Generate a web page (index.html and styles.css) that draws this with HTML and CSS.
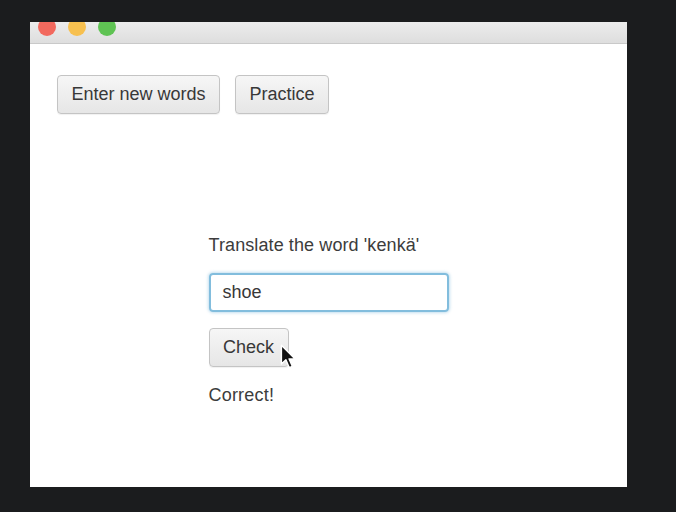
FILE: index.html
```html
<!DOCTYPE html>
<html>
<head>
<meta charset="utf-8">
<link rel="stylesheet" href="styles.css">
</head>
<body>
<div class="window">
  <div class="titlebar">
    <span class="light red"></span>
    <span class="light yellow"></span>
    <span class="light green"></span>
  </div>
  <div class="content">
    <div class="toolbar">
      <button class="btn btn-lg">Enter new words</button>
      <button class="btn btn-lg">Practice</button>
    </div>
    <div class="practice">
      <div class="label">Translate the word 'kenkä'</div>
      <div class="field">shoe</div>
      <div class="check-row">
        <button class="btn btn-check">Check</button>
        <svg class="cursor" width="17" height="26" viewBox="0 0 14 22">
          <path d="M1 1 L1 17 L4.8 13.4 L7.6 20 L10.2 18.9 L7.5 12.6 L12.6 12.6 Z" fill="#111" stroke="#fff" stroke-width="1.2" stroke-linejoin="round"/>
        </svg>
      </div>
      <div class="result">Correct!</div>
    </div>
  </div>
</div>
</body>
</html>
```

FILE: styles.css
```css
html, body {
  margin: 0;
  padding: 0;
}
body {
  background: #1b1c1e;
  width: 676px;
  height: 512px;
  padding: 22px 0 0 30px;
  box-sizing: border-box;
  font-family: "Liberation Sans", Arial, sans-serif;
  overflow: hidden;
}
.window {
  width: 597px;
  height: 465px;
  background: #ffffff;
  display: flex;
  flex-direction: column;
  overflow: hidden;
}
.titlebar {
  height: 21px;
  flex: none;
  background: linear-gradient(#ececec, #dedede);
  border-bottom: 1px solid #c9c9c9;
  display: flex;
  align-items: flex-start;
  gap: 12px;
  padding-left: 8px;
  overflow: hidden;
}
.light {
  width: 18px;
  height: 18px;
  border-radius: 50%;
  margin-top: -4px;
  flex: none;
}
.red { background: #f2695e; }
.yellow { background: #f7c04f; }
.green { background: #5fc353; }
.content {
  flex: 1;
  display: flex;
  flex-direction: column;
}
.toolbar {
  display: flex;
  gap: 15px;
  padding: 31px 0 0 27px;
}
.btn {
  font-family: "Liberation Sans", Arial, sans-serif;
  font-size: 18px;
  color: #383838;
  background: linear-gradient(#f6f6f6, #e6e6e6);
  border: 1px solid #c4c4c4;
  border-radius: 4px;
  box-shadow: 0 1px 1px rgba(0,0,0,0.06);
  padding: 0;
  height: 39px;
  box-sizing: border-box;
}
.btn-lg:first-child { width: 163px; }
.btn-lg:last-child { width: 94px; }
.practice {
  display: flex;
  flex-direction: column;
  align-items: flex-start;
  width: 240px;
  margin: 120px auto 0;
}
.label {
  font-size: 18px;
  line-height: 22px;
  color: #3c3c3c;
  letter-spacing: 0.1px;
}
.field {
  margin-top: 17px;
  width: 240px;
  height: 39px;
  box-sizing: border-box;
  border: 2px solid #82bddd;
  border-radius: 4px;
  box-shadow: 0 0 3px 1px rgba(122,185,220,0.45);
  font-size: 18px;
  color: #383838;
  line-height: 35px;
  padding-left: 12px;
}
.check-row {
  margin-top: 16px;
  position: relative;
}
.btn-check {
  width: 80px;
  display: block;
}
.cursor {
  position: absolute;
  left: 71px;
  top: 16px;
}
.result {
  margin-top: 17px;
  font-size: 18px;
  line-height: 22px;
  color: #3c3c3c;
  letter-spacing: 0.2px;
}
```
